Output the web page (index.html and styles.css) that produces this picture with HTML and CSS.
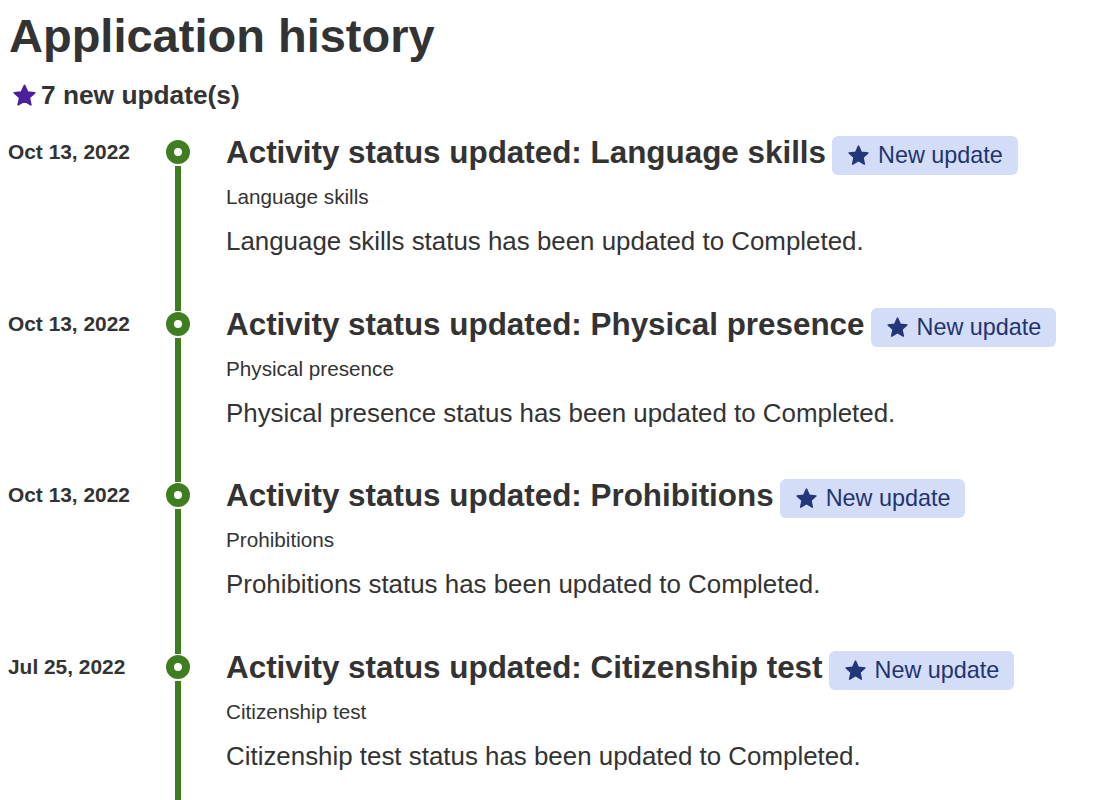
FILE: index.html
```html
<!DOCTYPE html>
<html lang="en">
<head>
<meta charset="utf-8">
<title>Application history</title>
<link rel="stylesheet" href="styles.css">
</head>
<body>
<header class="page-head">
  <h1 class="page-title">Application history</h1>
  <p class="summary">
    <svg class="summary-star" viewBox="0 0 24 24" aria-hidden="true"><polygon points="12,2.2 14.9,8.6 21.8,9.4 16.6,14.1 18.1,21 12,17.4 5.9,21 7.4,14.1 2.2,9.4 9.1,8.6"/></svg>
    <span>7 new update(s)</span>
  </p>
</header>

<ol class="timeline">
  <li class="event">
    <div class="event-date">Oct 13, 2022</div>
    <div class="event-rail"><span class="rail-dot"></span><span class="rail-line"></span></div>
    <div class="event-body">
      <div class="event-head">
        <h2 class="event-title">Activity status updated: Language skills</h2>
        <span class="badge"><svg class="badge-star" viewBox="0 0 24 24" aria-hidden="true"><polygon points="12,2.2 14.9,8.6 21.8,9.4 16.6,14.1 18.1,21 12,17.4 5.9,21 7.4,14.1 2.2,9.4 9.1,8.6"/></svg>New update</span>
      </div>
      <p class="event-sub">Language skills</p>
      <p class="event-text">Language skills status has been updated to Completed.</p>
    </div>
  </li>
  <li class="event">
    <div class="event-date">Oct 13, 2022</div>
    <div class="event-rail"><span class="rail-dot"></span><span class="rail-line"></span></div>
    <div class="event-body">
      <div class="event-head">
        <h2 class="event-title">Activity status updated: Physical presence</h2>
        <span class="badge"><svg class="badge-star" viewBox="0 0 24 24" aria-hidden="true"><polygon points="12,2.2 14.9,8.6 21.8,9.4 16.6,14.1 18.1,21 12,17.4 5.9,21 7.4,14.1 2.2,9.4 9.1,8.6"/></svg>New update</span>
      </div>
      <p class="event-sub">Physical presence</p>
      <p class="event-text">Physical presence status has been updated to Completed.</p>
    </div>
  </li>
  <li class="event">
    <div class="event-date">Oct 13, 2022</div>
    <div class="event-rail"><span class="rail-dot"></span><span class="rail-line"></span></div>
    <div class="event-body">
      <div class="event-head">
        <h2 class="event-title">Activity status updated: Prohibitions</h2>
        <span class="badge"><svg class="badge-star" viewBox="0 0 24 24" aria-hidden="true"><polygon points="12,2.2 14.9,8.6 21.8,9.4 16.6,14.1 18.1,21 12,17.4 5.9,21 7.4,14.1 2.2,9.4 9.1,8.6"/></svg>New update</span>
      </div>
      <p class="event-sub">Prohibitions</p>
      <p class="event-text">Prohibitions status has been updated to Completed.</p>
    </div>
  </li>
  <li class="event">
    <div class="event-date">Jul 25, 2022</div>
    <div class="event-rail"><span class="rail-dot"></span><span class="rail-line"></span></div>
    <div class="event-body">
      <div class="event-head">
        <h2 class="event-title">Activity status updated: Citizenship test</h2>
        <span class="badge"><svg class="badge-star" viewBox="0 0 24 24" aria-hidden="true"><polygon points="12,2.2 14.9,8.6 21.8,9.4 16.6,14.1 18.1,21 12,17.4 5.9,21 7.4,14.1 2.2,9.4 9.1,8.6"/></svg>New update</span>
      </div>
      <p class="event-sub">Citizenship test</p>
      <p class="event-text">Citizenship test status has been updated to Completed.</p>
    </div>
  </li>
</ol>
</body>
</html>
```

FILE: styles.css
```css
html, body {
  margin: 0;
  padding: 0;
  background: #ffffff;
}
body {
  padding: 8px;
  font-family: "Liberation Sans", Arial, Helvetica, sans-serif;
  color: #333333;
  overflow: hidden;
  height: 784px;
}
.page-head {
  margin: 0;
}
.page-title {
  margin: 0;
  font-size: 47px;
  line-height: 1.2;
  font-weight: 700;
  padding-left: 1px;
}
.summary {
  margin: 16px 0 0 0;
  display: flex;
  align-items: center;
  font-size: 26.3px;
  line-height: 30px;
  font-weight: 700;
}
.summary-star {
  width: 25px;
  height: 25px;
  margin: 0 4px 0 4px;
  fill: #4b1f9e;
  stroke: #4b1f9e;
  stroke-width: 1.6;
  stroke-linejoin: round;
}
.timeline {
  list-style: none;
  margin: 21px 0 0 0;
  padding: 0;
}
.event {
  display: flex;
  height: 171.5px;
}
.event-date {
  width: 150px;
  flex: none;
  margin-top: 9px;
  font-size: 20.9px;
  line-height: 24px;
  font-weight: 700;
}
.event-rail {
  width: 40px;
  flex: none;
  display: flex;
  flex-direction: column;
  align-items: center;
}
.event-rail::before {
  content: "";
  width: 6px;
  height: 8px;
  margin-bottom: 1px;
  background: #3f7e20;
}
.event:first-child .event-rail::before {
  background: transparent;
}
.rail-dot {
  box-sizing: border-box;
  width: 24px;
  height: 24px;
  border-radius: 50%;
  border: 8px solid #3f7e20;
  background: #ffffff;
  flex: none;
}
.rail-line {
  flex: 1;
  width: 6px;
  margin-top: 2px;
  background: #3f7e20;
}
.event-body {
  margin-left: 28px;
  min-width: 0;
}
.event-head {
  display: flex;
  align-items: flex-start;
  gap: 6px;
  white-space: nowrap;
}
.event-title {
  margin: 3px 0 0 0;
  font-size: 31.4px;
  line-height: 1.2;
  font-weight: 700;
}
.badge {
  margin-top: 5px;
  display: inline-flex;
  align-items: center;
  height: 39px;
  box-sizing: border-box;
  padding: 0 15px 0 15px;
  border-radius: 6px;
  background: #d4ddf8;
  color: #1f3470;
  font-size: 23.4px;
}
.badge-star {
  width: 23px;
  height: 23px;
  margin-right: 8px;
  fill: #22377a;
  stroke: #22377a;
  stroke-width: 1.6;
  stroke-linejoin: round;
}
.event-sub {
  margin: 10px 0 0 0;
  font-size: 20.7px;
  line-height: 24px;
}
.event-text {
  margin: 17px 0 0 0;
  font-size: 25.9px;
  line-height: 1.2;
}
```
